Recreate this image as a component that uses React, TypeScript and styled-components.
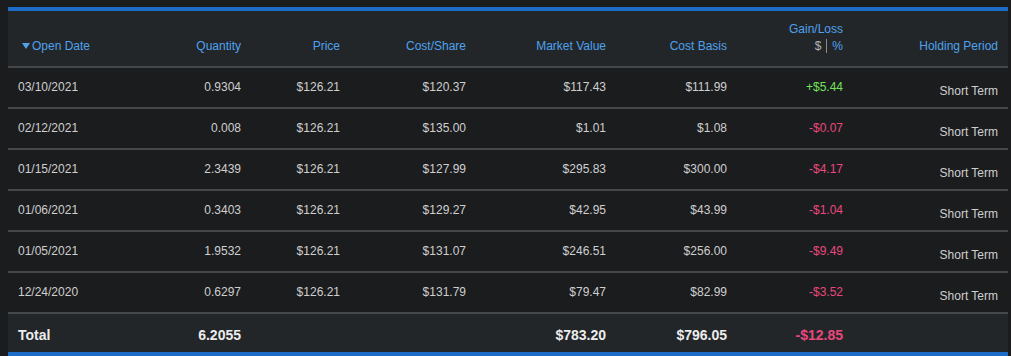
import styled, { createGlobalStyle } from "styled-components";

type Lot = {
  date: string;
  quantity: string;
  price: string;
  costShare: string;
  marketValue: string;
  costBasis: string;
  gain: string;
  period: string;
};

const lots: Lot[] = [
  { date: "03/10/2021", quantity: "0.9304", price: "$126.21", costShare: "$120.37", marketValue: "$117.43", costBasis: "$111.99", gain: "+$5.44", period: "Short Term" },
  { date: "02/12/2021", quantity: "0.008", price: "$126.21", costShare: "$135.00", marketValue: "$1.01", costBasis: "$1.08", gain: "-$0.07", period: "Short Term" },
  { date: "01/15/2021", quantity: "2.3439", price: "$126.21", costShare: "$127.99", marketValue: "$295.83", costBasis: "$300.00", gain: "-$4.17", period: "Short Term" },
  { date: "01/06/2021", quantity: "0.3403", price: "$126.21", costShare: "$129.27", marketValue: "$42.95", costBasis: "$43.99", gain: "-$1.04", period: "Short Term" },
  { date: "01/05/2021", quantity: "1.9532", price: "$126.21", costShare: "$131.07", marketValue: "$246.51", costBasis: "$256.00", gain: "-$9.49", period: "Short Term" },
  { date: "12/24/2020", quantity: "0.6297", price: "$126.21", costShare: "$131.79", marketValue: "$79.47", costBasis: "$82.99", gain: "-$3.52", period: "Short Term" },
];

const GlobalStyle = createGlobalStyle`
  html, body {
    margin: 0;
    background: #1b1c1e;
  }
  body {
    padding: 7px 0 0 8px;
    font-family: "Liberation Sans", Arial, sans-serif;
    font-size: 12px;
  }
`;

const Table = styled.div`
  width: 1000px;
  border-top: 4px solid #1d6cc8;
  border-bottom: 4px solid #1d6cc8;
`;

const Row = styled.div<{ $kind?: "head" | "body" | "total" }>`
  display: grid;
  grid-template-columns: 123px 100px 99px 126px 140px 121px 116px 155px;
  padding: 0 10px;
  box-sizing: border-box;
  background: ${(p) => (p.$kind === "body" ? "#1b1c1e" : "#232629")};
  height: ${(p) => (p.$kind === "head" ? "55px" : p.$kind === "total" ? "40px" : "41px")};
  border-top: ${(p) => (p.$kind === "head" ? "none" : "2px solid #45484b")};
  align-items: ${(p) => (p.$kind === "head" ? "end" : "center")};
  padding-top: ${(p) => (p.$kind === "total" ? "3px" : "0")};
  padding-bottom: ${(p) => (p.$kind === "head" ? "13px" : p.$kind === "total" ? "0" : "2px")};
`;

const HeadCell = styled.div<{ $left?: boolean }>`
  color: #4ea2ee;
  text-align: ${(p) => (p.$left ? "left" : "right")};
  line-height: 14px;
  white-space: nowrap;
`;

const SortArrow = styled.span`
  display: inline-block;
  width: 0;
  height: 0;
  border-left: 4px solid transparent;
  border-right: 4px solid transparent;
  border-top: 6px solid #4ea2ee;
  margin: 0 2px 1px 4px;
  vertical-align: middle;
`;

const Stack = styled.div`
  display: flex;
  flex-direction: column;
  align-items: flex-end;
  gap: 3px;
`;

const Units = styled.div`
  display: flex;
  align-items: center;
  gap: 5px;
`;

const Dollar = styled.span`
  color: #b4b4b4;
`;

const Divider = styled.span`
  width: 1px;
  height: 14px;
  background: #8a8a8a;
`;

const Cell = styled.div<{ $left?: boolean; $tone?: "gain" | "loss"; $bold?: boolean; $low?: boolean }>`
  text-align: ${(p) => (p.$left ? "left" : "right")};
  color: ${(p) =>
    p.$tone === "gain" ? "#72e25a" : p.$tone === "loss" ? "#e9487e" : p.$bold ? "#ececec" : "#cfcfcf"};
  font-weight: ${(p) => (p.$bold ? 700 : 400)};
  font-size: ${(p) => (p.$bold ? "14px" : "12px")};
  padding-top: ${(p) => (p.$low ? "8px" : "0")};
  white-space: nowrap;
`;

function toneOf(v: string) {
  return v.startsWith("-") ? "loss" : "gain";
}

export default function App() {
  return (
    <>
      <GlobalStyle />
      <Table>
        <Row $kind="head">
          <HeadCell $left>
            <SortArrow />
            Open Date
          </HeadCell>
          <HeadCell>Quantity</HeadCell>
          <HeadCell>Price</HeadCell>
          <HeadCell>Cost/Share</HeadCell>
          <HeadCell>Market Value</HeadCell>
          <HeadCell>Cost Basis</HeadCell>
          <HeadCell>
            <Stack>
              <span>Gain/Loss</span>
              <Units>
                <Dollar>$</Dollar>
                <Divider />
                <span>%</span>
              </Units>
            </Stack>
          </HeadCell>
          <HeadCell>Holding Period</HeadCell>
        </Row>
        {lots.map((lot) => (
          <Row $kind="body" key={lot.date}>
            <Cell $left>{lot.date}</Cell>
            <Cell>{lot.quantity}</Cell>
            <Cell>{lot.price}</Cell>
            <Cell>{lot.costShare}</Cell>
            <Cell>{lot.marketValue}</Cell>
            <Cell>{lot.costBasis}</Cell>
            <Cell $tone={toneOf(lot.gain)}>{lot.gain}</Cell>
            <Cell $low>{lot.period}</Cell>
          </Row>
        ))}
        <Row $kind="total">
          <Cell $left $bold>Total</Cell>
          <Cell $bold>6.2055</Cell>
          <Cell $bold />
          <Cell $bold />
          <Cell $bold>$783.20</Cell>
          <Cell $bold>$796.05</Cell>
          <Cell $bold $tone="loss">-$12.85</Cell>
          <Cell $bold />
        </Row>
      </Table>
    </>
  );
}
